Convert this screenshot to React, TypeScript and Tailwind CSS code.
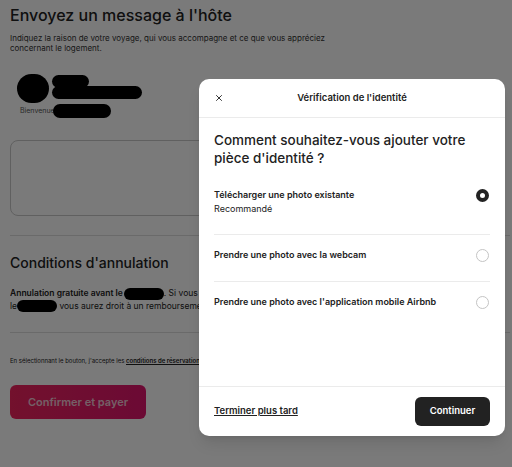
import { X } from "lucide-react"

function Blob({ className }: { className: string }) {
  return <span className={"inline-block rounded-full bg-black align-middle " + className} />
}

function Option({ title, sub, checked }: { title: string; sub?: string; checked?: boolean }) {
  return (
    <div className="flex items-start justify-between pt-[13px] pb-[19px]">
      <div>
        <div className="text-[9px] font-semibold leading-[14px] text-[#222]">{title}</div>
        {sub && <div className="mt-[1px] text-[9px] leading-[12px] text-[#222]">{sub}</div>}
      </div>
      {checked ? (
        <span className="mt-[1px] mr-[1px] h-[13px] w-[13px] rounded-full border-[4px] border-[#222] bg-white" />
      ) : (
        <span className="mt-[1px] mr-[1px] h-[13px] w-[13px] rounded-full border border-[#c4c4c4] bg-white" />
      )}
    </div>
  )
}

export default function App() {
  return (
    <div className="relative h-[467px] w-[512px] overflow-hidden bg-white font-['Inter',sans-serif] text-[#222]">
      {/* page behind the dialog */}
      <div className="w-[560px] px-[10px] pt-[5px]">
        <h2 className="text-[16px] font-medium leading-[20px]">Envoyez un message à l'hôte</h2>
        <p className="mt-[8px] w-[345px] text-[8px] leading-[10px] text-[#333]">
          Indiquez la raison de votre voyage, qui vous accompagne et ce que vous appréciez
          concernant le logement.
        </p>
        <div className="mt-[21px] flex items-start gap-[3px] pl-[7px]">
          <Blob className="h-[29px] w-[32px]" />
          <div className="flex flex-col">
            <Blob className="mt-[1px] h-[13px] w-[37px]" />
            <Blob className="-mt-[2px] h-[13px] w-[90px]" />
          </div>
        </div>
        <div className="mt-[1px] flex items-center pl-[10px] text-[7px] text-[#555]">
          Bienvenue
          <Blob className="-ml-[2px] h-[14px] w-[58px]" />
        </div>
        <div className="mt-[22px] h-[76px] w-[400px] rounded-[8px] border border-[#c9c9c9]" />
        <div className="mt-[19px] h-px w-[500px] bg-[#ddd]" />
        <h2 className="mt-[18px] text-[14px] font-medium leading-[18px]">Conditions d'annulation</h2>
        <p className="mt-[15px] w-[189px] overflow-hidden whitespace-nowrap text-[8.5px] leading-[12px]">
          <span className="font-semibold">Annulation gratuite avant le</span>
          <Blob className="ml-[1px] h-[12px] w-[40px]" />. Si vous
          <br />
          le
          <Blob className="h-[12px] w-[40px]" /> vous aurez droit à un remboursement
        </p>
        <div className="mt-[20px] h-px w-[500px] bg-[#ddd]" />
        <p className="mt-[24px] w-[189px] overflow-hidden whitespace-nowrap text-[6px] leading-[8px]">
          En sélectionnant le bouton, j'accepte les <span className="font-semibold underline">conditions de réservation</span>
        </p>
        <button className="mt-[20px] h-[34px] w-[136px] rounded-[6px] bg-gradient-to-r from-[#f0245e] to-[#e0146e] text-[11px] font-semibold text-[#f3c8d6]">
          Confirmer et payer
        </button>
      </div>

      {/* overlay */}
      <div className="absolute inset-0 bg-black/[0.52]" />

      {/* dialog */}
      <div className="absolute left-[199px] top-[79px] flex h-[357px] w-[306px] flex-col rounded-[10px] bg-white shadow-lg">
        <div className="relative flex h-[39px] items-center justify-center border-b border-[#ebebeb]">
          <X className="absolute left-[15px] h-[10px] w-[10px] text-[#222]" strokeWidth={2.2} />
          <span className="text-[9.5px] font-semibold">Vérification de l'identité</span>
        </div>
        <div className="flex-1 px-[15px]">
          <h3 className="mt-[13px] text-[13.5px] font-medium leading-[18px] text-[#222]">
            Comment souhaitez-vous ajouter votre pièce d'identité ?
          </h3>
          <div className="mt-[8px] divide-y divide-[#ebebeb]">
            <Option title="Télécharger une photo existante" sub="Recommandé" checked />
            <Option title="Prendre une photo avec la webcam" />
            <Option title="Prendre une photo avec l'application mobile Airbnb" />
          </div>
        </div>
        <div className="flex h-[50px] items-center justify-between border-t border-[#ebebeb] px-[15px]">
          <span className="text-[9.5px] font-semibold underline">Terminer plus tard</span>
          <button className="h-[29px] w-[75px] rounded-[6px] bg-[#222] text-[9.5px] font-semibold text-white">
            Continuer
          </button>
        </div>
      </div>
    </div>
  )
}
